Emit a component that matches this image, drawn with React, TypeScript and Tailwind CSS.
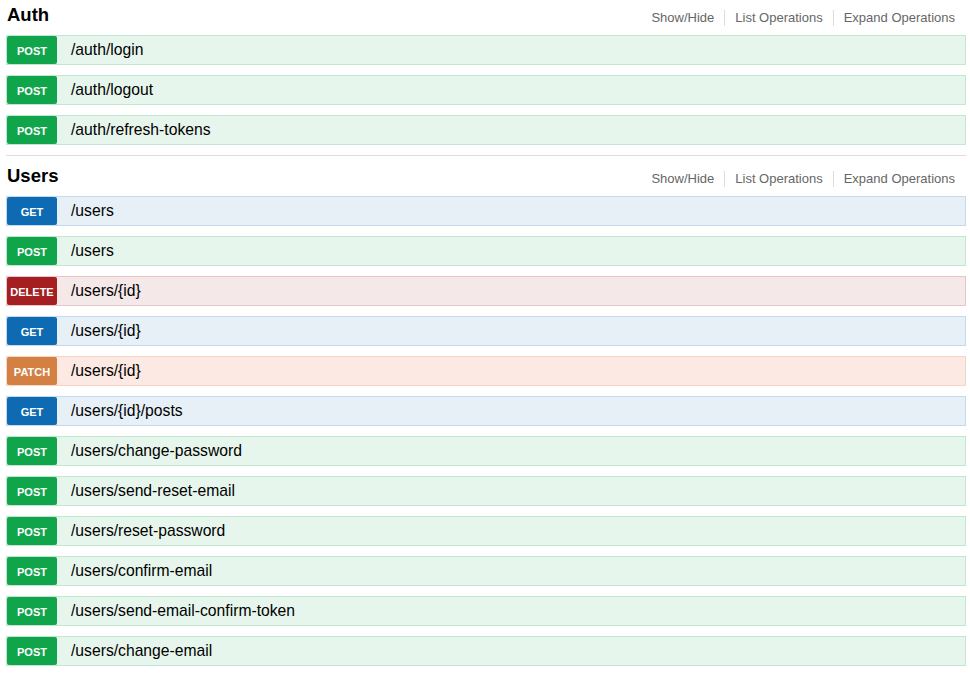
import React from "react";

type Method = "GET" | "POST" | "DELETE" | "PATCH";

const styles: Record<Method, { row: string; badge: string }> = {
  GET: { row: "bg-[#e7f0f7] border-[#c3d9ec]", badge: "bg-[#0f6ab4]" },
  POST: { row: "bg-[#e7f6ec] border-[#c3e8d1]", badge: "bg-[#10a54a]" },
  DELETE: { row: "bg-[#f5e8e8] border-[#e8c6c7]", badge: "bg-[#a41e22]" },
  PATCH: { row: "bg-[#fce9e3] border-[#f5d5c3]", badge: "bg-[#d38042]" },
};

const sections: { name: string; ops: [Method, string][] }[] = [
  {
    name: "Auth",
    ops: [
      ["POST", "/auth/login"],
      ["POST", "/auth/logout"],
      ["POST", "/auth/refresh-tokens"],
    ],
  },
  {
    name: "Users",
    ops: [
      ["GET", "/users"],
      ["POST", "/users"],
      ["DELETE", "/users/{id}"],
      ["GET", "/users/{id}"],
      ["PATCH", "/users/{id}"],
      ["GET", "/users/{id}/posts"],
      ["POST", "/users/change-password"],
      ["POST", "/users/send-reset-email"],
      ["POST", "/users/reset-password"],
      ["POST", "/users/confirm-email"],
      ["POST", "/users/send-email-confirm-token"],
      ["POST", "/users/change-email"],
    ],
  },
];

function Row({ method, path }: { method: Method; path: string }) {
  const s = styles[method];
  return (
    <div className={`flex items-center h-[30px] mb-[10px] border ${s.row}`}>
      <span
        className={`${s.badge} w-[50px] h-[28px] pt-[2px] rounded-[2px] flex items-center justify-center text-white font-bold text-[11px] leading-none`}
      >
        {method}
      </span>
      <span className="ml-[14px] text-[15.7px] text-black leading-none">{path}</span>
    </div>
  );
}

export default function App() {
  return (
    <div
      className="bg-white min-h-[675px] pl-[6px] w-[966px]"
      style={{ fontFamily: '"Liberation Sans", Arial, sans-serif' }}
    >
      {sections.map((sec, i) => (
        <div key={sec.name}>
          {i > 0 && <div className="h-px bg-[#dddddd] mb-[5px]" />}
          <div className="flex justify-between items-start h-[35px]">
            <h2 className="pt-[2px] pl-px text-[18.5px] leading-[25px] font-bold text-black">{sec.name}</h2>
            <div className="flex mt-[10px] text-[13px] leading-[16px] text-[#666666]">
              <span className="px-[10px]">Show/Hide</span>
              <span className="px-[10px] border-l border-[#dddddd]">List Operations</span>
              <span className="pl-[10px] pr-[11px] border-l border-[#dddddd]">Expand Operations</span>
            </div>
          </div>
          {sec.ops.map(([m, p], j) => (
            <Row key={j} method={m} path={p} />
          ))}
        </div>
      ))}
    </div>
  );
}
